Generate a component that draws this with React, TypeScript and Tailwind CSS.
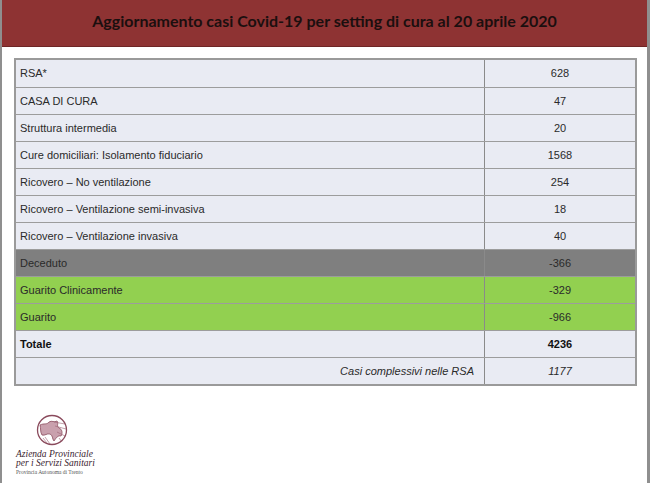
import React from "react";

type Row = { label: string; value: string; kind?: "dark" | "green" | "total" | "note" };

const rows: Row[] = [
  { label: "RSA*", value: "628" },
  { label: "CASA DI CURA", value: "47" },
  { label: "Struttura intermedia", value: "20" },
  { label: "Cure domiciliari: Isolamento fiduciario", value: "1568" },
  { label: "Ricovero – No ventilazione", value: "254" },
  { label: "Ricovero – Ventilazione semi-invasiva", value: "18" },
  { label: "Ricovero – Ventilazione invasiva", value: "40" },
  { label: "Deceduto", value: "-366", kind: "dark" },
  { label: "Guarito Clinicamente", value: "-329", kind: "green" },
  { label: "Guarito", value: "-966", kind: "green" },
  { label: "Totale", value: "4236", kind: "total" },
  { label: "Casi complessivi nelle RSA", value: "1177", kind: "note" },
];

function Logo() {
  return (
    <div className="flex flex-col items-start">
      <svg width="34" height="32" viewBox="0 0 34 32" className="ml-[33px]">
        <circle cx="17" cy="16" r="14.5" fill="none" stroke="#8a4a5c" strokeWidth="1.3" />
        <path d="M5 11 C9 9 12 11 14 8 C17 6 19 9 22 7 C24 9 21 12 24 14 C27 15 28 19 26 22 C23 21 21 24 19 27 C17 25 18 21 15 20 C12 19 10 22 7 21 C5 18 6 14 5 11 Z" fill="#c9a0ad" stroke="#8a4a5c" strokeWidth="0.8" />
        <path d="M19 8 L30 10 M20 12 L31 15 M22 18 L30 22 M24 24 L27 28" stroke="#9b6272" strokeWidth="0.6" />
        <path d="M8 24 L12 29 M10 23 L15 30" stroke="#9b6272" strokeWidth="0.6" />
      </svg>
      <div
        className="mt-[4px] ml-[14px] italic text-[#3a2430]"
        style={{ fontFamily: '"Liberation Serif", serif' }}
      >
        <div className="text-[9.5px] leading-[8.5px]">Azienda Provinciale</div>
        <div className="text-[9.5px] leading-[9px]">per i Servizi Sanitari</div>
        <div className="text-[5.5px] leading-[8px] not-italic text-[#555]">Provincia Autonoma di Trento</div>
      </div>
    </div>
  );
}

export default function App() {
  return (
    <div className="w-[650px] h-[483px] bg-white border-l-[2px] border-r-[3px] border-[#8f8f8f] flex flex-col overflow-hidden">
      <div className="h-[47px] bg-[#8e3333] border-b border-[#6e2626] flex items-center justify-center">
        <span
          className="text-[16px] font-bold text-[#1b0f0f] mb-[4px]"
          style={{ fontFamily: 'Lato, "Open Sans", sans-serif' }}
        >
          Aggiornamento casi Covid-19 per setting di cura al 20 aprile 2020
        </span>
      </div>
      <div className="pl-[12px] pt-[11px]">
        <div
          className="w-[623px] border-[2px] border-[#9a9a9a] bg-[#e9ebf3] text-[11px] text-[#2a2a2a]"
          style={{ fontFamily: '"Liberation Sans", Arial, sans-serif' }}
        >
          {rows.map((r, i) => {
            const bg =
              r.kind === "dark" ? "bg-[#7f7f7f]" : r.kind === "green" ? "bg-[#92d050]" : "bg-[#e9ebf3]";
            const bold = r.kind === "total" ? "font-bold text-[#111]" : "";
            return (
              <div
                key={i}
                className={`flex h-[27px] ${bg} ${i > 0 ? "border-t border-[#9c9c9c]" : ""} ${bold}`}
              >
                <div
                  className={`w-[469px] flex items-center px-[4px] border-r border-[#8a8a8a] ${
                    r.kind === "note" ? "justify-end italic pr-[10px]" : ""
                  }`}
                >
                  {r.label}
                </div>
                <div className={`flex-1 flex items-center justify-center ${r.kind === "note" ? "italic" : ""}`}>
                  {r.value}
                </div>
              </div>
            );
          })}
        </div>
      </div>
      <div className="mt-[28px]">
        <Logo />
      </div>
    </div>
  );
}
